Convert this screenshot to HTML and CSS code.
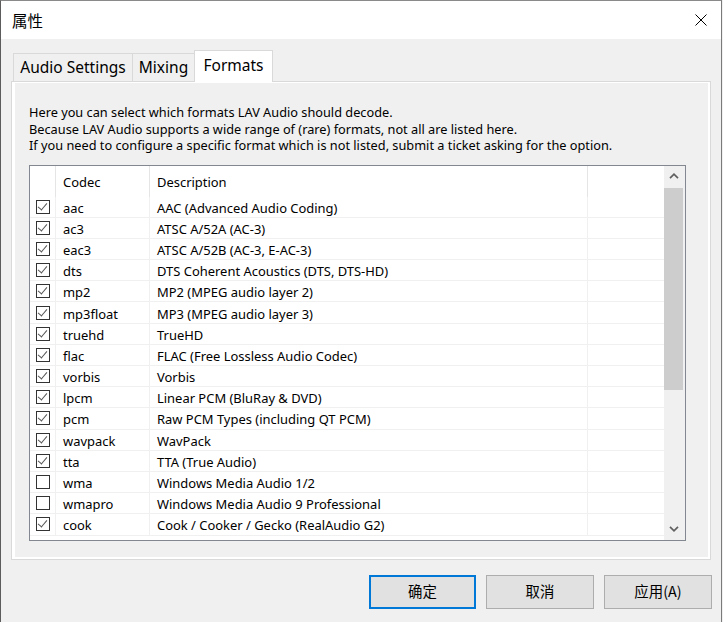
FILE: index.html
```html
<!DOCTYPE html>
<html lang="zh">
<head>
<meta charset="utf-8">
<title>属性</title>
<link rel="stylesheet" href="styles.css">
</head>
<body>
<div class="window">
  <div class="titlebar">
    <span class="title">属性</span>
    <svg class="close" width="12" height="12" viewBox="0 0 12 12"><path d="M0.5 0.5 L11.5 11.5 M11.5 0.5 L0.5 11.5" stroke="#000" stroke-width="1" fill="none"/></svg>
  </div>
  <div class="main">
    <div class="tabs">
      <div class="tab tab-audio">Audio Settings</div>
      <div class="tab tab-mixing">Mixing</div>
      <div class="tab tab-formats active">Formats</div>
    </div>
    <div class="panel">
      <div class="page">
        <p class="intro">Here you can select which formats LAV Audio should decode.<br>Because LAV Audio supports a wide range of (rare) formats, not all are listed here.<br>If you need to configure a specific format which is not listed, submit a ticket asking for the option.</p>
        <div class="list">
          <div class="list-body">
            <div class="row header">
              <div class="cell c-check"></div>
              <div class="cell c-codec">Codec</div>
              <div class="cell c-desc">Description</div>
              <div class="cell c-rest"></div>
            </div>
            <div class="row"><div class="cell c-check"><span class="cb on"></span></div><div class="cell c-codec">aac</div><div class="cell c-desc">AAC (Advanced Audio Coding)</div><div class="cell c-rest"></div></div>
            <div class="row"><div class="cell c-check"><span class="cb on"></span></div><div class="cell c-codec">ac3</div><div class="cell c-desc">ATSC A/52A (AC-3)</div><div class="cell c-rest"></div></div>
            <div class="row"><div class="cell c-check"><span class="cb on"></span></div><div class="cell c-codec">eac3</div><div class="cell c-desc">ATSC A/52B (AC-3, E-AC-3)</div><div class="cell c-rest"></div></div>
            <div class="row"><div class="cell c-check"><span class="cb on"></span></div><div class="cell c-codec">dts</div><div class="cell c-desc">DTS Coherent Acoustics (DTS, DTS-HD)</div><div class="cell c-rest"></div></div>
            <div class="row"><div class="cell c-check"><span class="cb on"></span></div><div class="cell c-codec">mp2</div><div class="cell c-desc">MP2 (MPEG audio layer 2)</div><div class="cell c-rest"></div></div>
            <div class="row"><div class="cell c-check"><span class="cb on"></span></div><div class="cell c-codec">mp3float</div><div class="cell c-desc">MP3 (MPEG audio layer 3)</div><div class="cell c-rest"></div></div>
            <div class="row"><div class="cell c-check"><span class="cb on"></span></div><div class="cell c-codec">truehd</div><div class="cell c-desc">TrueHD</div><div class="cell c-rest"></div></div>
            <div class="row"><div class="cell c-check"><span class="cb on"></span></div><div class="cell c-codec">flac</div><div class="cell c-desc">FLAC (Free Lossless Audio Codec)</div><div class="cell c-rest"></div></div>
            <div class="row"><div class="cell c-check"><span class="cb on"></span></div><div class="cell c-codec">vorbis</div><div class="cell c-desc">Vorbis</div><div class="cell c-rest"></div></div>
            <div class="row"><div class="cell c-check"><span class="cb on"></span></div><div class="cell c-codec">lpcm</div><div class="cell c-desc">Linear PCM (BluRay &amp; DVD)</div><div class="cell c-rest"></div></div>
            <div class="row"><div class="cell c-check"><span class="cb on"></span></div><div class="cell c-codec">pcm</div><div class="cell c-desc">Raw PCM Types (including QT PCM)</div><div class="cell c-rest"></div></div>
            <div class="row"><div class="cell c-check"><span class="cb on"></span></div><div class="cell c-codec">wavpack</div><div class="cell c-desc">WavPack</div><div class="cell c-rest"></div></div>
            <div class="row"><div class="cell c-check"><span class="cb on"></span></div><div class="cell c-codec">tta</div><div class="cell c-desc">TTA (True Audio)</div><div class="cell c-rest"></div></div>
            <div class="row"><div class="cell c-check"><span class="cb"></span></div><div class="cell c-codec">wma</div><div class="cell c-desc">Windows Media Audio 1/2</div><div class="cell c-rest"></div></div>
            <div class="row"><div class="cell c-check"><span class="cb"></span></div><div class="cell c-codec">wmapro</div><div class="cell c-desc">Windows Media Audio 9 Professional</div><div class="cell c-rest"></div></div>
            <div class="row"><div class="cell c-check"><span class="cb on"></span></div><div class="cell c-codec">cook</div><div class="cell c-desc">Cook / Cooker / Gecko (RealAudio G2)</div><div class="cell c-rest"></div></div>
          </div>
          <div class="scrollbar">
            <div class="sb-btn"><svg width="10" height="6" viewBox="0 0 10 6"><polyline points="1,5.2 5,1.2 9,5.2" fill="none" stroke="#606060" stroke-width="1.7"/></svg></div>
            <div class="sb-track"><div class="sb-thumb"></div></div>
            <div class="sb-btn"><svg width="10" height="6" viewBox="0 0 10 6"><polyline points="1,0.8 5,4.8 9,0.8" fill="none" stroke="#606060" stroke-width="1.7"/></svg></div>
          </div>
        </div>
      </div>
    </div>
    <div class="buttons">
      <button class="btn default">确定</button>
      <button class="btn">取消</button>
      <button class="btn">应用(A)</button>
    </div>
  </div>
</div>
</body>
</html>
```
FILE: styles.css
```css
html, body {
  margin: 0;
  padding: 0;
  background: #f0f0f0;
}
body {
  width: 723px;
  height: 622px;
  overflow: hidden;
  font-family: "Noto Sans", "Noto Sans CJK SC", sans-serif;
  color: #000;
}
.window {
  width: 722px;
  height: 622px;
  box-sizing: border-box;
  border-left: 1px solid #5c5c5c;
  border-top: 1px solid #8a8a8a;
  border-right: 1px solid #7a7a7a;
  background: #f0f0f0;
}
.titlebar {
  height: 38px;
  background: #fff;
  display: flex;
  align-items: center;
  justify-content: space-between;
  padding: 0 14px 0 11px;
}
.title {
  font-family: "Noto Sans CJK SC", sans-serif;
  font-size: 15.5px;
  padding-bottom: 1px;
}
.close {
  display: block;
}
.main {
  padding: 11px 9px 0 10px;
}
.tabs {
  display: flex;
  align-items: flex-end;
  height: 31px;
  padding-left: 2px;
}
.tab {
  box-sizing: border-box;
  height: 28px;
  border: 1px solid #d9d9d9;
  border-bottom: none;
  background: #f0f0f0;
  font-size: 15.5px;
  display: flex;
  align-items: center;
  justify-content: center;
  margin-left: -1px;
  padding-bottom: 2px;
}
.tab-audio { width: 120px; margin-left: 0; }
.tab-mixing { width: 63px; }
.tab-formats { width: 79px; }
.tab.active {
  height: 32px;
  background: #fff;
  margin-bottom: -1px;
  position: relative;
  z-index: 1;
  padding-bottom: 4px;
}
.panel {
  width: 700px;
  height: 479px;
  box-sizing: border-box;
  border: 1px solid #d9d9d9;
  background: #fff;
  padding: 1px 2px 2px 3px;
}
.page {
  height: 100%;
  background: #f0f0f0;
  padding: 21px 0 0 14px;
  box-sizing: border-box;
}
.intro {
  margin: 0;
  font-size: 12.75px;
  line-height: 16.5px;
  white-space: nowrap;
}
.list {
  margin-top: 11px;
  width: 657px;
  height: 376px;
  box-sizing: border-box;
  border: 1px solid #828790;
  background: #fff;
  display: flex;
}
.list-body {
  width: 634px;
}
.row {
  display: grid;
  grid-template-columns: 26px 94px 438px 76px;
  height: 21.2px;
  font-size: 12.95px;
}
.row.header {
  height: 31px;
}
.cell {
  box-sizing: border-box;
  border-right: 1px solid #f0f0f0;
  border-bottom: 1px solid #f0f0f0;
  display: flex;
  align-items: center;
  padding-left: 7px;
  padding-top: 2px;
  white-space: nowrap;
}
.header .cell {
  border-bottom: none;
  border-right-color: #e5e5e5;
  padding-top: 1px;
}
.cell.c-rest { border-right: none; }
.cell.c-check {
  padding-left: 6px;
  padding-top: 0;
}
.cb {
  display: block;
  width: 14px;
  height: 14px;
  box-sizing: border-box;
  border: 1px solid #333;
  background: #fff;
  position: relative;
}
.cb.on::after {
  content: "";
  position: absolute;
  left: 3px;
  top: 0px;
  width: 4px;
  height: 8px;
  border-right: 1.3px solid #555;
  border-bottom: 1.3px solid #555;
  transform: rotate(40deg);
}
.scrollbar {
  width: 21px;
  background: #f0f0f0;
  display: flex;
  flex-direction: column;
}
.sb-btn {
  height: 21px;
  display: flex;
  align-items: center;
  justify-content: center;
  padding-right: 1px;
}
.sb-btn svg { display: block; }
.sb-track {
  flex: 1;
  padding: 1px 2px 0 0;
}
.sb-thumb {
  height: 202px;
  background: #cdcdcd;
}
.buttons {
  display: flex;
  justify-content: flex-end;
  gap: 10px;
  margin-top: 15px;
}
.btn {
  box-sizing: border-box;
  width: 108px;
  height: 34px;
  background: #e1e1e1;
  border: 1px solid #adadad;
  font-family: "Noto Sans CJK SC", sans-serif;
  font-size: 14.4px;
  color: #000;
  padding: 0 0 3px 0;
}
.btn.default {
  border: 2px solid #0078d7;
  width: 107px;
}
```
